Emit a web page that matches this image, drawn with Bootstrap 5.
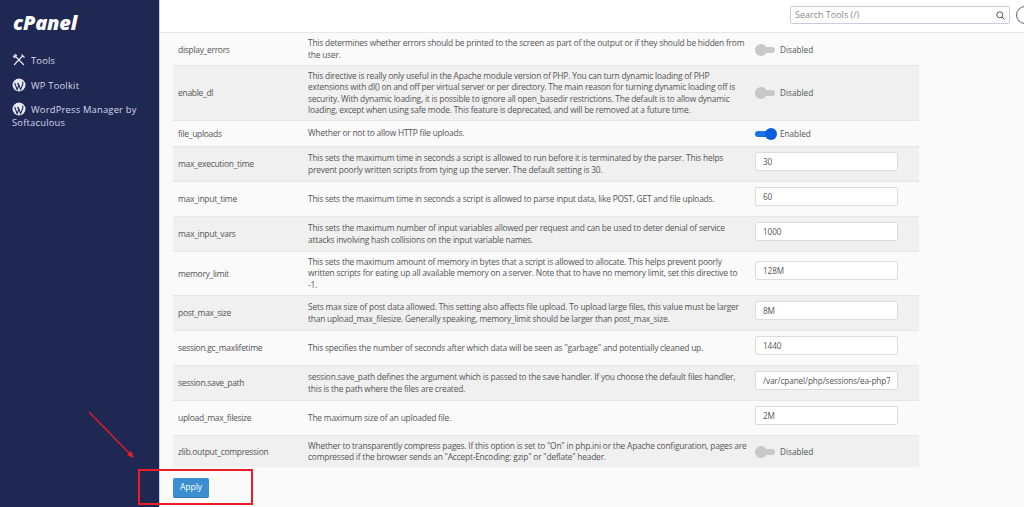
<!DOCTYPE html>
<html lang="en">
<head>
  <meta charset="UTF-8">
  <title>MultiPHP INI Editor</title>
  <link href="https://cdn.jsdelivr.net/npm/bootstrap@5.3.0/dist/css/bootstrap.min.css" rel="stylesheet">
  <style>
    html, body { height: 507px; overflow: hidden; }
    body { font-family: "Open Sans", sans-serif; font-size: 8px; color: #555; background: #fafafa; }

    .side-bar { width: 160px; flex: none; background: #1f2753; border-right: 1px solid #c9cde0; padding: 13px 12px; color: #d5d9ea; }
    .side-logo { font-weight: 800; font-style: italic; font-size: 20px; line-height: 20px; color: #fff; letter-spacing: -0.2px; margin-bottom: 20px; padding-left: 1px; }
    .side-link { font-size: 9.4px; line-height: 13px; letter-spacing: .2px; margin-bottom: 10.5px; color: #d5d9ea; text-decoration: none; display: block; }
    .side-link svg { vertical-align: -3px; margin-right: 5px; }

    .main-area { min-width: 0; overflow: hidden; }
    .top-bar { height: 33px; background: #fff; border-bottom: 1px solid #e6e6e6; padding: 6px 0 0 630px; }
    .search-box { width: 220px; height: 18px; flex: none; border: 1px solid #c9cde0; border-radius: 2px; padding: 0 4px; font-size: 9px; color: #8a8a8a; }
    .user-ring { width: 18px; height: 18px; border: 1px solid #5a6188; border-radius: 50%; margin-left: 6px; flex: none; }

    .ini-table { width: 746px; margin: 0 0 0 13px; table-layout: fixed; font-size: 8.4px; letter-spacing: -0.2px; line-height: 11.3px; color: #555; }
    .ini-table td { padding: 0 2px 0 5px; vertical-align: middle; border-bottom: 1px solid #e6e6e6; background: #fafafa; }
    .ini-table tr:nth-child(even) td { background: #f0f0f0; }
    .ini-table tr:last-child td { border-bottom: 0; }
    .ini-table td:first-child { font-size: 8.5px; letter-spacing: -0.3px; padding-top: 1px; }
    .ini-table td:last-child { padding: 1px 21px 0 5px; font-size: 8.2px; letter-spacing: 0; }
    .name-col { width: 130px; }
    .value-col { width: 169px; }

    .ini-input { width: 143px; height: 19px; min-height: 0; margin-bottom: 6px; border: 1px solid #dcdcdc; border-radius: 2px; padding: 0 7px; background: #fff; font-size: 8.2px; letter-spacing: -0.1px; color: #555; line-height: 17px; }
    .toggle-track { display: inline-block; position: relative; width: 20px; height: 6px; border-radius: 3px; background: #c8c8c8; margin-right: 5px; vertical-align: 0; }
    .toggle-track::after { content: ""; position: absolute; left: 0; top: -3px; width: 12px; height: 12px; border-radius: 50%; background: #c8c8c8; }
    .toggle-track.is-on { background: #1a73e8; }
    .toggle-track.is-on::after { left: 10px; background: #0b5ed7; }

    .apply-btn { display: block; background: #3b8ed0; border: 0; border-bottom: 1px solid #2f78b4; color: #fff; border-radius: 2px; font-size: 8.5px; width: 36px; height: 20px; padding: 0; margin-left: 13px; margin-top: 11px; }

    .mark-box { position: absolute; left: 138px; top: 469px; width: 115px; height: 36px; border: 2px solid #ee1c25; }
    .mark-arrow { position: absolute; left: 85px; top: 408px; }
  </style>
</head>
<body>

<div class="d-flex" style="height:507px">
  <div class="side-bar">
    <div class="side-logo">cPanel</div>
    <a class="side-link" href="#">
      <svg width="14" height="14" viewBox="0 0 14 14" fill="none" stroke="#e6e9f4" stroke-width="1.1"><path d="M2 12 11 2.5M9.5 1.5l3 3M12 12 3.5 3.5M1.5 3.5l2-2 1 1-2 2z"/></svg>Tools
    </a>
    <a class="side-link" href="#">
      <svg width="14" height="14" viewBox="0 0 14 14"><circle cx="7" cy="7" r="6.5" fill="#e6e9f4"/><path d="M2.6 5l2.6 6.6 1.4-4-1-2.6M6 5l2.6 6.6L10.8 6c.3-1 0-1.6-.4-2.2" fill="none" stroke="#1f2753" stroke-width="1.1"/></svg>WP Toolkit
    </a>
    <a class="side-link" href="#">
      <svg width="14" height="14" viewBox="0 0 14 14"><circle cx="7" cy="7" r="6.5" fill="#e6e9f4"/><path d="M2.6 5l2.6 6.6 1.4-4-1-2.6M6 5l2.6 6.6L10.8 6c.3-1 0-1.6-.4-2.2" fill="none" stroke="#1f2753" stroke-width="1.1"/></svg>WordPress Manager by Softaculous
    </a>
  </div>

  <div class="main-area flex-grow-1">
    <div class="top-bar d-flex align-items-start">
      <div class="search-box d-flex align-items-center justify-content-between">
        <span>Search Tools (/)</span>
        <svg width="9" height="9" viewBox="0 0 9 9" fill="none" stroke="#555"><circle cx="3.8" cy="3.8" r="3"/><path d="M6 6l2.5 2.5"/></svg>
      </div>
      <div class="user-ring"></div>
    </div>

    <table class="ini-table">
      <colgroup><col class="name-col"><col><col class="value-col"></colgroup>
      <tbody>
        <tr style="height:32px"><td>display_errors</td><td>This determines whether errors should be printed to the screen as part of the output or if they should be hidden from the user.</td><td><span class="toggle-track"></span>Disabled</td></tr>
        <tr style="height:55px"><td>enable_dl</td><td>This directive is really only useful in the Apache module version of PHP. You can turn dynamic loading of PHP extensions with dl() on and off per virtual server or per directory. The main reason for turning dynamic loading off is security. With dynamic loading, it is possible to ignore all open_basedir restrictions. The default is to allow dynamic loading, except when using safe mode. This feature is deprecated, and will be removed at a future time.</td><td><span class="toggle-track"></span>Disabled</td></tr>
        <tr style="height:26px"><td>file_uploads</td><td>Whether or not to allow HTTP file uploads.</td><td><span class="toggle-track is-on"></span>Enabled</td></tr>
        <tr style="height:35px"><td>max_execution_time</td><td>This sets the maximum time in seconds a script is allowed to run before it is terminated by the parser. This helps prevent poorly written scripts from tying up the server. The default setting is 30.</td><td><input class="form-control ini-input" type="text" value="30"></td></tr>
        <tr style="height:35px"><td>max_input_time</td><td>This sets the maximum time in seconds a script is allowed to parse input data, like POST, GET and file uploads.</td><td><input class="form-control ini-input" type="text" value="60"></td></tr>
        <tr style="height:35px"><td>max_input_vars</td><td>This sets the maximum number of input variables allowed per request and can be used to deter denial of service attacks involving hash collisions on the input variable names.</td><td><input class="form-control ini-input" type="text" value="1000"></td></tr>
        <tr style="height:44px"><td>memory_limit</td><td>This sets the maximum amount of memory in bytes that a script is allowed to allocate. This helps prevent poorly written scripts for eating up all available memory on a server. Note that to have no memory limit, set this directive to -1.</td><td><input class="form-control ini-input" type="text" value="128M"></td></tr>
        <tr style="height:35px"><td>post_max_size</td><td>Sets max size of post data allowed. This setting also affects file upload. To upload large files, this value must be larger than upload_max_filesize. Generally speaking, memory_limit should be larger than post_max_size.</td><td><input class="form-control ini-input" type="text" value="8M"></td></tr>
        <tr style="height:35px"><td>session.gc_maxlifetime</td><td>This specifies the number of seconds after which data will be seen as "garbage" and potentially cleaned up.</td><td><input class="form-control ini-input" type="text" value="1440"></td></tr>
        <tr style="height:35px"><td>session.save_path</td><td>session.save_path defines the argument which is passed to the save handler. If you choose the default files handler, this is the path where the files are created.</td><td><input class="form-control ini-input" type="text" value="/var/cpanel/php/sessions/ea-php74/"></td></tr>
        <tr style="height:35px"><td>upload_max_filesize</td><td>The maximum size of an uploaded file.</td><td><input class="form-control ini-input" type="text" value="2M"></td></tr>
        <tr style="height:32px"><td>zlib.output_compression</td><td>Whether to transparently compress pages. If this option is set to "On" in php.ini or the Apache configuration, pages are compressed if the browser sends an "Accept-Encoding: gzip" or "deflate" header.</td><td><span class="toggle-track"></span>Disabled</td></tr>
      </tbody>
    </table>

    <button class="btn btn-primary apply-btn" type="button">Apply</button>
  </div>
</div>

<svg class="mark-arrow" width="52" height="62" viewBox="0 0 52 62"><path d="M4 4 47 48" stroke="#ee1c25" stroke-width="1.2"/><path d="M49 50 42 47 46 43z" fill="#ee1c25"/></svg>
<div class="mark-box"></div>

</body>
</html>
